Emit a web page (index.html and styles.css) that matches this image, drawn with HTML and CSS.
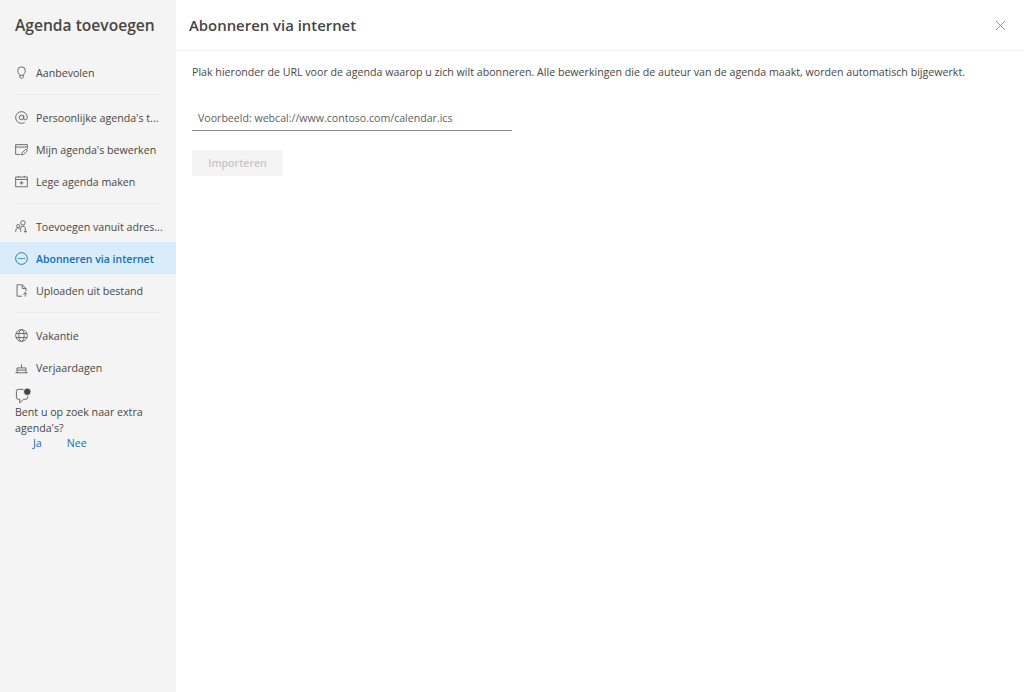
FILE: index.html
```html
<!DOCTYPE html>
<html lang="nl">
<head>
<meta charset="utf-8">
<title>Agenda toevoegen</title>
<link rel="stylesheet" href="styles.css">
</head>
<body>
<div class="app">
  <aside class="sidebar">
    <h1 class="side-title">Agenda toevoegen</h1>
    <nav class="nav">
      <a class="item"><svg class="ico" viewBox="0 0 16 16"><path d="M5.800 11.500C5.400 9.500 3.300 8.800 3.300 5.800a4.700 4.700 0 0 1 9.400 0c0 3-2.100 3.700-2.500 5.700zM6 11.500v2.500l1 1h2l1-1v-2.500"/></svg><span class="label">Aanbevolen</span></a>
      <div class="sep"></div>
      <a class="item"><svg class="ico" viewBox="0 0 16 16"><circle cx="8" cy="8" r="2.800"/><path d="M10.800 5.200v4.300c0 2.200 4.400 2 4.400-1.700A7.200 7.200 0 1 0 8 15.200c1.500 0 2.800-.3 3.900-1.100"/></svg><span class="label">Persoonlijke agenda's t...</span></a>
      <a class="item"><svg class="ico" viewBox="0 0 16 16"><path d="M6.500 14H.8V2h14.400v5M.8 5h14.400M8 14.800l.7-2.600 4.800-4.800 1.900 1.900-4.800 4.800z"/></svg><span class="label">Mijn agenda's bewerken</span></a>
      <a class="item"><svg class="ico" viewBox="0 0 16 16"><path d="M.8 2.500h14.400v12H.8zM.8 5.500h14.400M4.500 1v1.500M11.500 1v1.500M8 7.500v4.500M5.500 9.800h5"/></svg><span class="label">Lege agenda maken</span></a>
      <div class="sep"></div>
      <a class="item"><svg class="ico" viewBox="0 0 16 16"><circle cx="9.800" cy="3.500" r="2.700"/><circle cx="4" cy="7.500" r="2"/><path d="M.8 14.500c0-3 1-4.800 3.200-4.800.8 0 1.400.2 1.900.6M7 14.500v-5c0-2.400 5.600-2.400 5.600 0v2M12.800 11v4M11 13.500l1.800 1.800 1.800-1.800"/></svg><span class="label">Toevoegen vanuit adres...</span></a>
      <a class="item active"><svg class="ico" viewBox="0 0 16 16"><circle cx="8" cy="8" r="7.200"/><path d="M3.800 8h8.400" stroke-dasharray="1.400 .4"/></svg><span class="label">Abonneren via internet</span></a>
      <a class="item"><svg class="ico" viewBox="0 0 16 16"><path d="M8.500 15H2.500V1h6.500l4.500 4.500V9M9 1v4.500h4.500M12.500 10.500V15.500M10.300 12.700l2.200-2.200 2.200 2.200"/></svg><span class="label">Uploaden uit bestand</span></a>
      <div class="sep"></div>
      <a class="item"><svg class="ico" viewBox="0 0 16 16"><circle cx="8" cy="8" r="7.200"/><ellipse cx="8" cy="8" rx="3.300" ry="7.200"/><path d="M1.300 5.500h13.400M1.300 10.500h13.400"/></svg><span class="label">Vakantie</span></a>
      <a class="item"><svg class="ico" viewBox="0 0 16 16"><path d="M.5 14.500h15M2.500 14.500V8.500h11v6M2.500 11.200h11M8 8.500V4"/></svg><span class="label">Verjaardagen</span></a>
    </nav>
    <div class="feedback">
      <svg class="fb-ico" viewBox="0 0 18 18"><path d="M9 2.500H3.500A2 2 0 0 0 1.500 4.500v6.500a2 2 0 0 0 2 2H5v3.800L9 13h2.500a2 2 0 0 0 2-2V9.500"/><circle class="fb-dot" cx="13" cy="5" r="4"/></svg>
      <p class="fb-text">Bent u op zoek naar extra agenda's?</p>
      <div class="fb-links"><a class="link">Ja</a><a class="link">Nee</a></div>
    </div>
  </aside>
  <main class="main">
    <header class="head">
      <h2 class="head-title">Abonneren via internet</h2>
      <svg class="close" viewBox="0 0 12 12"><path d="M1 1l10 10M11 1L1 11"/></svg>
    </header>
    <section class="body">
      <p class="intro">Plak hieronder de URL voor de agenda waarop u zich wilt abonneren. Alle bewerkingen die de auteur van de agenda maakt, worden automatisch bijgewerkt.</p>
      <div class="field">Voorbeeld: webcal://www.contoso.com/calendar.ics</div>
      <div class="btn">Importeren</div>
    </section>
  </main>
</div>
</body>
</html>
```
FILE: styles.css
```css
* { box-sizing: border-box; }
html, body { margin: 0; height: 100%; }
body {
  font-family: "Open Sans", "Noto Sans", "Liberation Sans", sans-serif;
  color: #323130;
  background: #fff;
}
.app { display: flex; height: 692px; overflow: hidden; }
.sidebar {
  width: 176px;
  flex: none;
  background: #f4f4f4;
  display: flex;
  flex-direction: column;
}
.side-title {
  margin: 0;
  padding: 14px 15px 0;
  height: 56px;
  font-size: 15.6px;
  line-height: 22px;
  font-weight: 600;
  color: #484644;
}
.nav { display: flex; flex-direction: column; }
.item {
  height: 32px;
  display: flex;
  align-items: center;
  padding-left: 15px;
  font-size: 10.65px;
  color: #484644;
}
.ico {
  width: 13px;
  height: 13px;
  flex: none;
  margin-right: 8px;
  fill: none;
  stroke: #605e5c;
  stroke-width: 1.1;
}
.label { white-space: nowrap; padding-top: 2px; }
.item.active { background: #d9ecf9; color: #106ebe; font-weight: 600; font-size: 10.5px; }
.item.active .ico { stroke: #106ebe; }
.sep { height: 1px; margin: 6px 16px 6px 15px; background: #eaeaea; }
.feedback { padding: 4px 15px 0; font-size: 10.65px; color: #484644; }
.fb-ico { display: block; width: 17px; height: 17px; margin-bottom: 1px; fill: none; stroke: #605e5c; stroke-width: 1; }
.fb-dot { fill: #484644; stroke: #f4f4f4; }
.fb-text { margin: 0; line-height: 15.5px; }
.fb-links { display: flex; gap: 25px; padding-left: 18px; line-height: 15.5px; }
.link { color: #106ebe; }
.main { flex: 1; min-width: 0; display: flex; flex-direction: column; }
.head {
  height: 51px;
  flex: none;
  border-bottom: 1px solid #f3f2f1;
  display: flex;
  align-items: center;
  justify-content: space-between;
  padding: 0 18px 0 13px;
}
.head-title {
  margin: 0;
  font-size: 14.9px;
  font-weight: 600;
  color: #484644;
}
.close { width: 11px; height: 11px; fill: none; stroke: #8a8886; stroke-width: 1; }
.body { padding: 13px 16px; }
.intro { margin: 0; font-size: 10.65px; line-height: 16px; color: #484644; white-space: nowrap; }
.field {
  width: 320px;
  height: 27px;
  margin-top: 24px;
  padding-left: 6px;
  border-bottom: 1px solid #8a8886;
  font-size: 10.6px;
  line-height: 28px;
  color: #605e5c;
}
.btn {
  width: 91px;
  height: 26px;
  margin-top: 19px;
  background: #f4f4f4;
  border-radius: 1px;
  font-size: 10.6px;
  font-weight: 600;
  line-height: 26px;
  text-align: center;
  color: #c8c6c4;
}
```
